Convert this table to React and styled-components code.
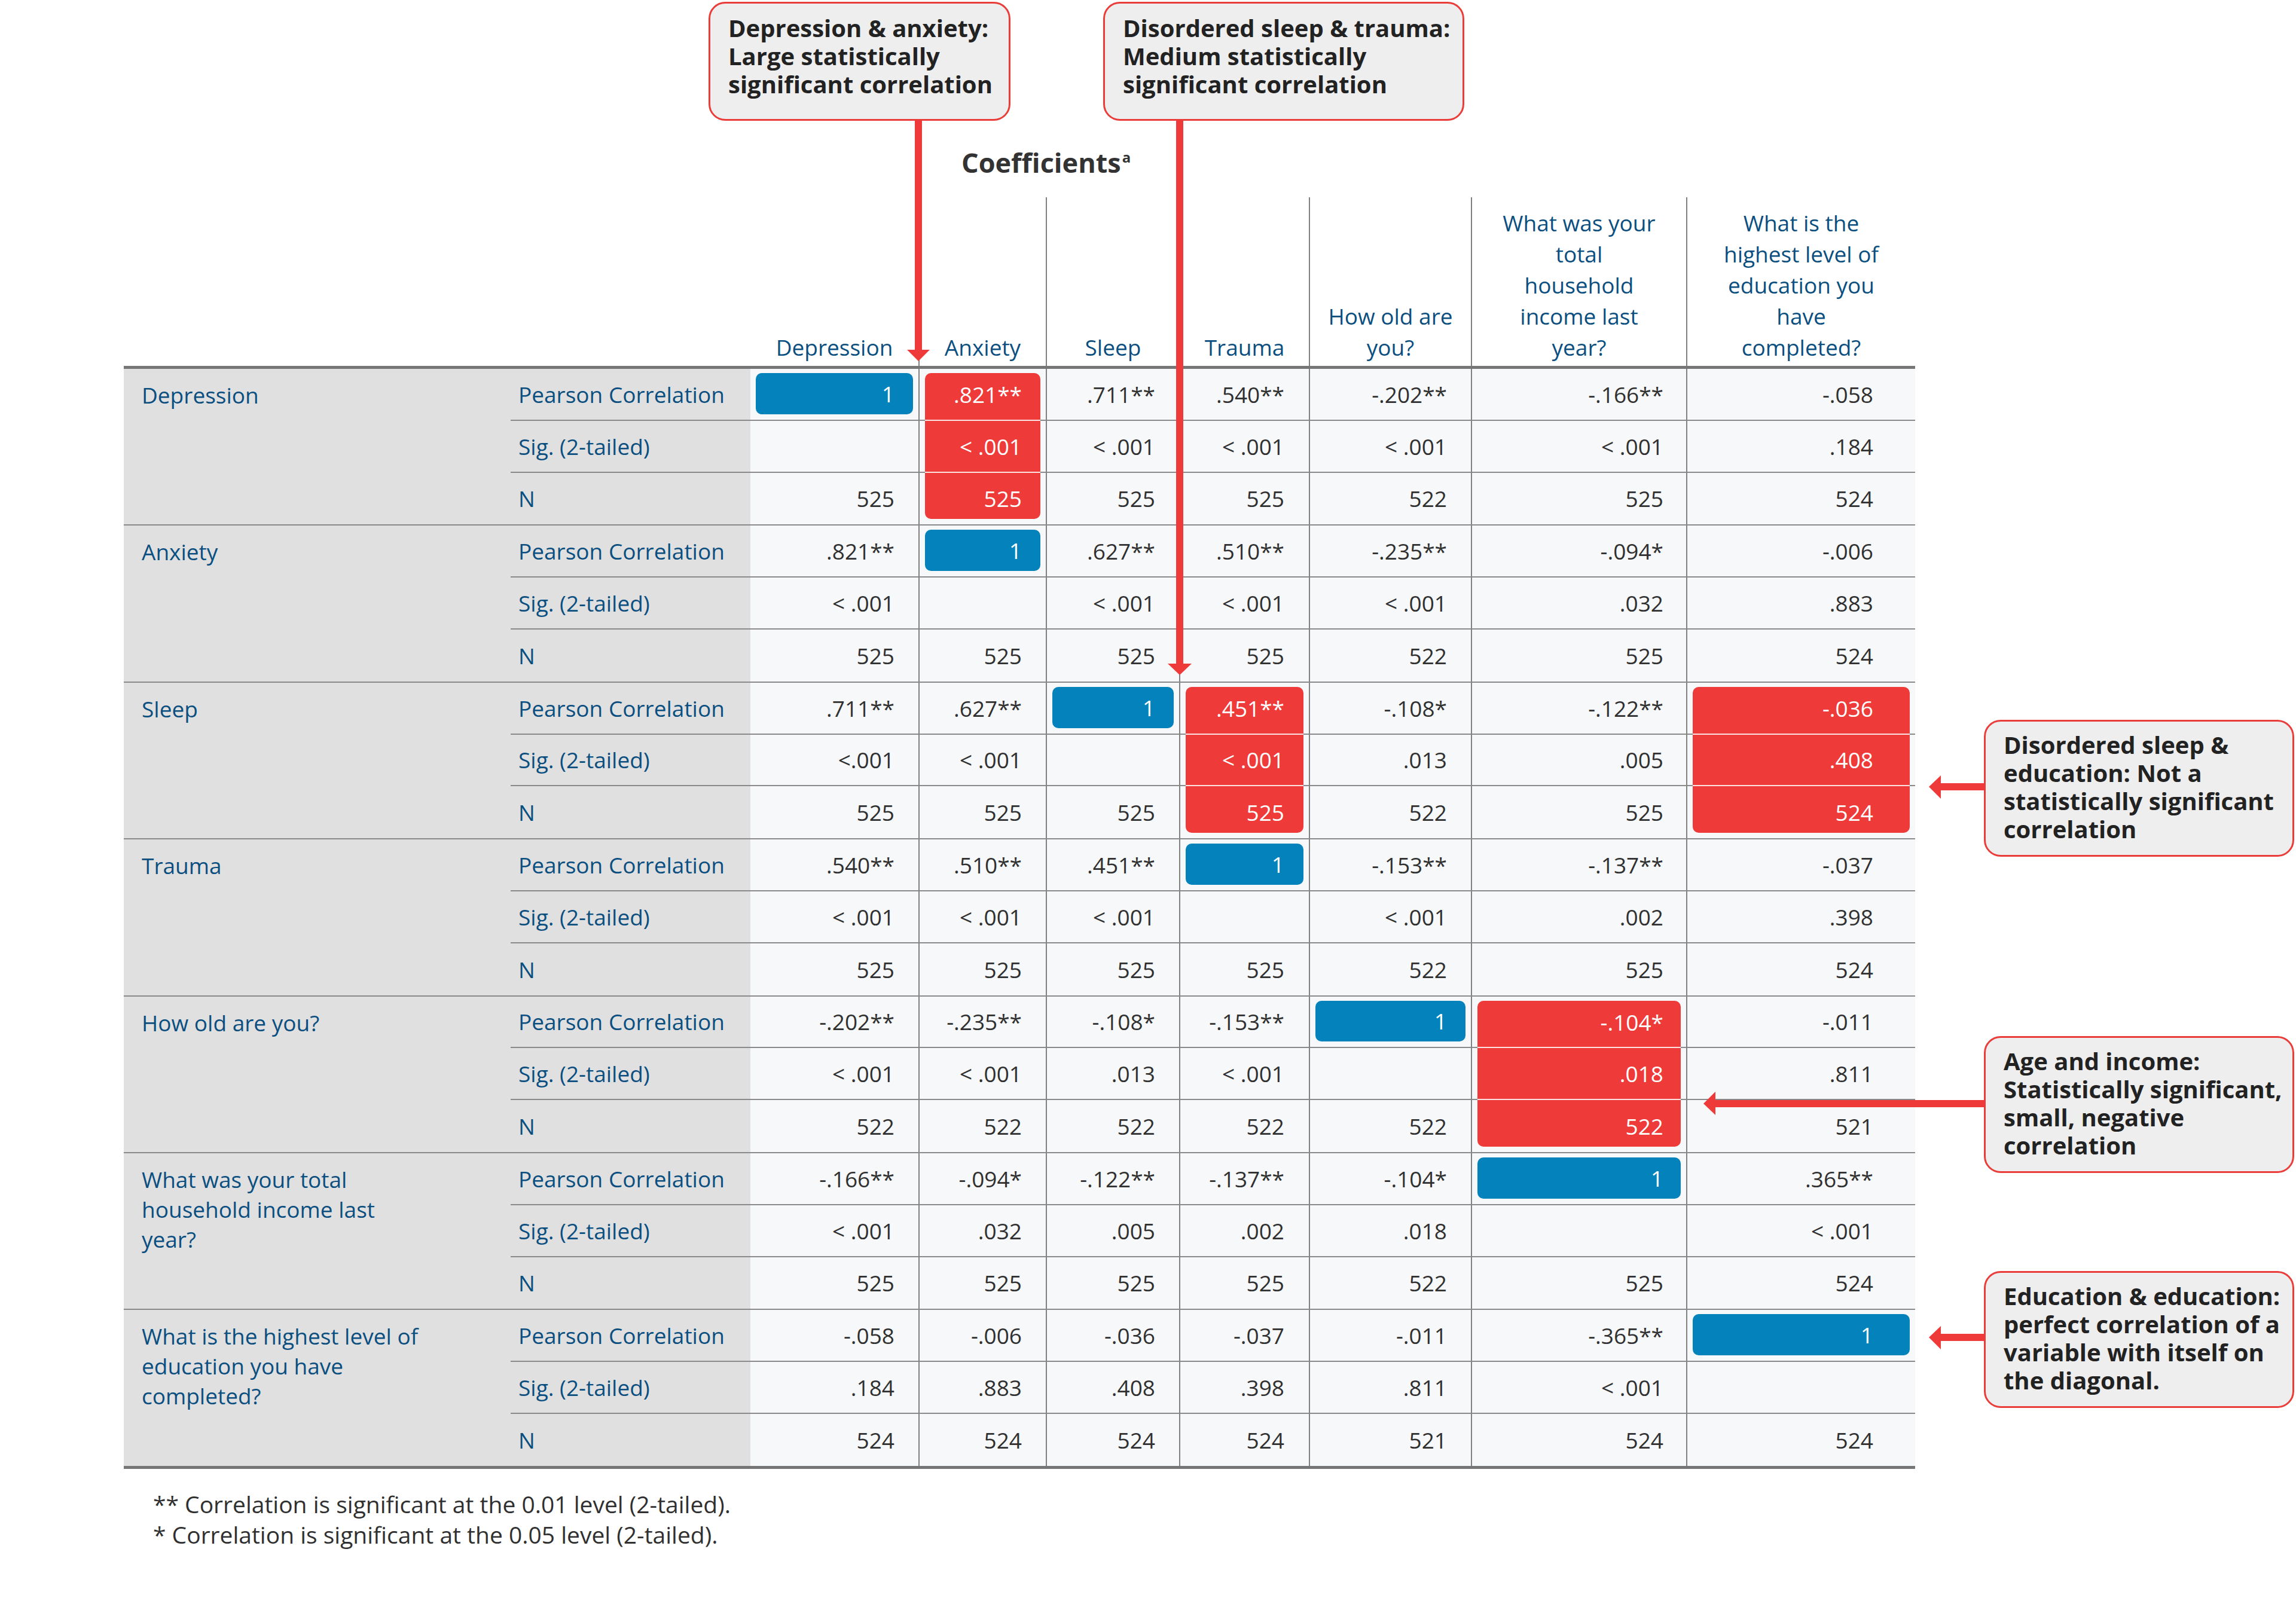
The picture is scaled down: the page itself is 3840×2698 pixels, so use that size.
import React from "react"
import styled, { createGlobalStyle } from "styled-components"

const GlobalStyle = createGlobalStyle`
  html, body {
    margin: 0;
    padding: 0;
    background: #ffffff;
  }
  body {
    font-family: "Open Sans", "Liberation Sans", sans-serif;
  }
`

// column widths of the 7 data columns and the right padding of their numbers
const COLS = [281, 213, 223, 217, 271, 360, 383]
const PADS = [40, 40, 40, 41, 40, 38, 70]
const TEMPLATE = `647px 401px ${COLS.map((w) => w + "px").join(" ")}`

const BLUE_TEXT = "#0b4f80"
const RED = "#ee3b39"
const BLUE = "#0382bb"

const Page = styled.div`
  position: relative;
  width: 3840px;
  height: 2698px;
  overflow: hidden;
  background: #ffffff;
`

const TopNotes = styled.div`
  display: flex;
  gap: 155px;
  padding: 3px 0 0 1185px;
`

const Callout = styled.div`
  box-sizing: border-box;
  width: ${(p) => p.$w}px;
  height: ${(p) => p.$h}px;
  padding: ${(p) => p.$top}px 16px 0 30px;
  background: #eeeeee;
  border: 3px solid #ea3d3a;
  border-radius: 28px;
  font-size: 40px;
  font-weight: 700;
  line-height: 47px;
  color: #222222;
  white-space: nowrap;
`

const Title = styled.div`
  margin: 40px 0 28px 1608px;
  height: 60px;
  font-size: 45px;
  font-weight: 700;
  line-height: 60px;
  color: #333333;
`

const Sup = styled.span`
  font-size: 24px;
  line-height: 0;
  vertical-align: 17px;
  margin-left: 2px;
`

const Main = styled.div`
  display: flex;
  align-items: flex-start;
`

const TableCol = styled.div`
  margin-left: 207px;
  width: 2996px;
  flex: none;
`

const HeadRow = styled.div`
  display: grid;
  grid-template-columns: ${TEMPLATE};
  height: 282px;
  border-bottom: 5px solid #767676;
`

const HeadCell = styled.div`
  display: flex;
  flex-direction: column;
  justify-content: flex-end;
  align-items: center;
  padding-bottom: 5px;
  border-left: ${(p) => (p.$line ? "2px solid #808080" : "none")};
  color: ${BLUE_TEXT};
  font-size: 37px;
  line-height: 52px;
  text-align: center;
  white-space: nowrap;
`

const Group = styled.div`
  display: grid;
  grid-template-columns: ${TEMPLATE};
  grid-template-rows: repeat(3, 1fr);
  height: 260.4px;
  border-bottom: ${(p) => (p.$last ? "5px solid #767676" : "2px solid #8a8a8a")};
`

const VarCell = styled.div`
  grid-row: 1 / span 3;
  grid-column: 1;
  background: #e0e0e0;
  padding: 19px 0 0 30px;
  color: ${BLUE_TEXT};
  font-size: 37px;
  line-height: 50px;
  white-space: nowrap;
`

const StatCell = styled.div`
  grid-column: 2;
  display: flex;
  align-items: center;
  padding-left: 13px;
  background: #e0e0e0;
  border-bottom: ${(p) => (p.$end ? "none" : "2px solid #8a8a8a")};
  color: ${BLUE_TEXT};
  font-size: 37px;
`

const DataCell = styled.div`
  display: flex;
  min-width: 0;
  background: #f7f8fa;
  border-left: ${(p) => (p.$line ? "2px solid #808080" : "none")};
  border-bottom: ${(p) => (p.$end ? "none" : "2px solid #8a8a8a")};
`

const pillShape = {
  none: "margin: 0;",
  single: "margin: 7px 9px 9px; border-radius: 10px;",
  top: "margin: 7px 9px -2px; border-radius: 10px 10px 0 0; border-bottom: 2px solid rgba(255,255,255,0.85); padding-bottom: 6px;",
  mid: "margin: 0 9px -2px; border-bottom: 2px solid rgba(255,255,255,0.85);",
  bot: "margin: 0 9px 9px; border-radius: 0 0 10px 10px; padding-top: 9px;",
}

const Value = styled.div`
  flex: 1;
  display: flex;
  align-items: center;
  justify-content: flex-end;
  box-sizing: border-box;
  padding-right: ${(p) => p.$pad - (p.$tone ? 9 : 0)}px;
  ${(p) => pillShape[p.$pos || "none"]}
  background: ${(p) => (p.$tone === "blue" ? BLUE : p.$tone === "red" ? RED : "transparent")};
  color: ${(p) => (p.$tone ? "#ffffff" : "#303030")};
  font-size: 37px;
  white-space: nowrap;
`

const Aside = styled.div`
  display: flex;
  flex-direction: column;
  margin-left: 115px;
`

const SideNote = styled(Callout)`
  margin-top: ${(p) => p.$gap}px;
`

const Notes = styled.div`
  margin: 33px 0 0 256px;
  font-size: 39px;
  line-height: 51px;
  color: #303030;
`

const Overlay = styled.svg`
  position: absolute;
  left: 0;
  top: 0;
  pointer-events: none;
`

const headers = [
  ["Depression"],
  ["Anxiety"],
  ["Sleep"],
  ["Trauma"],
  ["How old are", "you?"],
  ["What was your", "total", "household", "income last", "year?"],
  ["What is the", "highest level of", "education you", "have", "completed?"],
]

const groups = [
  {
    name: ["Depression"],
    rows: [
      ["1", ".821**", ".711**", ".540**", "-.202**", "-.166**", "-.058"],
      ["", "< .001", "< .001", "< .001", "< .001", "< .001", ".184"],
      ["525", "525", "525", "525", "522", "525", "524"],
    ],
  },
  {
    name: ["Anxiety"],
    rows: [
      [".821**", "1", ".627**", ".510**", "-.235**", "-.094*", "-.006"],
      ["< .001", "", "< .001", "< .001", "< .001", ".032", ".883"],
      ["525", "525", "525", "525", "522", "525", "524"],
    ],
  },
  {
    name: ["Sleep"],
    rows: [
      [".711**", ".627**", "1", ".451**", "-.108*", "-.122**", "-.036"],
      ["<.001", "< .001", "", "< .001", ".013", ".005", ".408"],
      ["525", "525", "525", "525", "522", "525", "524"],
    ],
  },
  {
    name: ["Trauma"],
    rows: [
      [".540**", ".510**", ".451**", "1", "-.153**", "-.137**", "-.037"],
      ["< .001", "< .001", "< .001", "", "< .001", ".002", ".398"],
      ["525", "525", "525", "525", "522", "525", "524"],
    ],
  },
  {
    name: ["How old are you?"],
    rows: [
      ["-.202**", "-.235**", "-.108*", "-.153**", "1", "-.104*", "-.011"],
      ["< .001", "< .001", ".013", "< .001", "", ".018", ".811"],
      ["522", "522", "522", "522", "522", "522", "521"],
    ],
  },
  {
    name: ["What was your total", "household income last", "year?"],
    rows: [
      ["-.166**", "-.094*", "-.122**", "-.137**", "-.104*", "1", ".365**"],
      ["< .001", ".032", ".005", ".002", ".018", "", "< .001"],
      ["525", "525", "525", "525", "522", "525", "524"],
    ],
  },
  {
    name: ["What is the highest level of", "education you have", "completed?"],
    rows: [
      ["-.058", "-.006", "-.036", "-.037", "-.011", "-.365**", "1"],
      [".184", ".883", ".408", ".398", ".811", "< .001", ""],
      ["524", "524", "524", "524", "521", "524", "524"],
    ],
  },
]

const stats = ["Pearson Correlation", "Sig. (2-tailed)", "N"]

// red highlighted blocks: group index -> column indexes
const redBlocks = { 0: [1], 2: [3, 6], 4: [5] }

const toneFor = (g, r, c) => {
  if (r === 0 && g === c) return { $tone: "blue", $pos: "single" }
  if ((redBlocks[g] || []).includes(c)) {
    return { $tone: "red", $pos: ["top", "mid", "bot"][r] }
  }
  return {}
}

const Lines = ({ lines }) => lines.map((l, i) => <div key={i}>{l}</div>)

const Arrows = () => (
  <Overlay width="3840" height="2698" viewBox="0 0 3840 2698">
    <g fill={RED}>
      <rect x="1530" y="200" width="12" height="388" />
      <polygon points="1517,585 1555,585 1536,604" />
      <rect x="1967" y="200" width="12" height="913" />
      <polygon points="1953,1110 1993,1110 1973,1129" />
      <rect x="3244" y="1310" width="76" height="12" />
      <polygon points="3246,1297 3246,1336 3226,1316" />
      <rect x="2867" y="1840" width="453" height="12" />
      <polygon points="2869,1826 2869,1865 2849,1846" />
      <rect x="3244" y="2231" width="76" height="12" />
      <polygon points="3246,2218 3246,2257 3226,2237" />
    </g>
  </Overlay>
)

const App = () => {
  return (
    <Page>
      <GlobalStyle />
      <TopNotes>
        <Callout $w={505} $h={199} $top={17}>
          Depression &amp; anxiety:<br />
          Large statistically<br />
          significant correlation
        </Callout>
        <Callout $w={604} $h={199} $top={17}>
          Disordered sleep &amp; trauma:<br />
          Medium statistically<br />
          significant correlation
        </Callout>
      </TopNotes>
      <Title>
        Coefficients<Sup>a</Sup>
      </Title>
      <Main>
        <TableCol>
          <HeadRow>
            <div />
            <div />
            {headers.map((h, i) => (
              <HeadCell key={i} $line={i > 0}>
                <Lines lines={h} />
              </HeadCell>
            ))}
          </HeadRow>
          {groups.map((g, gi) => (
            <Group key={gi} $last={gi === groups.length - 1}>
              <VarCell>
                <Lines lines={g.name} />
              </VarCell>
              {g.rows.map((row, ri) => (
                <React.Fragment key={ri}>
                  <StatCell $end={ri === 2} style={{ gridRow: ri + 1 }}>
                    {stats[ri]}
                  </StatCell>
                  {row.map((v, ci) => (
                    <DataCell key={ci} $line={ci > 0} $end={ri === 2} style={{ gridRow: ri + 1 }}>
                      <Value $pad={PADS[ci]} {...toneFor(gi, ri, ci)}>
                        {v}
                      </Value>
                    </DataCell>
                  ))}
                </React.Fragment>
              ))}
            </Group>
          ))}
        </TableCol>
        <Aside>
          <SideNote $w={519} $h={229} $top={15} $gap={874}>
            Disordered sleep &amp;<br />
            education: Not a<br />
            statistically significant<br />
            correlation
          </SideNote>
          <SideNote $w={519} $h={229} $top={15} $gap={300}>
            Age and income:<br />
            Statistically significant,<br />
            small, negative<br />
            correlation
          </SideNote>
          <SideNote $w={519} $h={229} $top={15} $gap={164}>
            Education &amp; education:<br />
            perfect correlation of a<br />
            variable with itself on<br />
            the diagonal.
          </SideNote>
        </Aside>
      </Main>
      <Notes>
        <div>** Correlation is significant at the 0.01 level (2-tailed).</div>
        <div>* Correlation is significant at the 0.05 level (2-tailed).</div>
      </Notes>
      <Arrows />
    </Page>
  )
}

export default App
